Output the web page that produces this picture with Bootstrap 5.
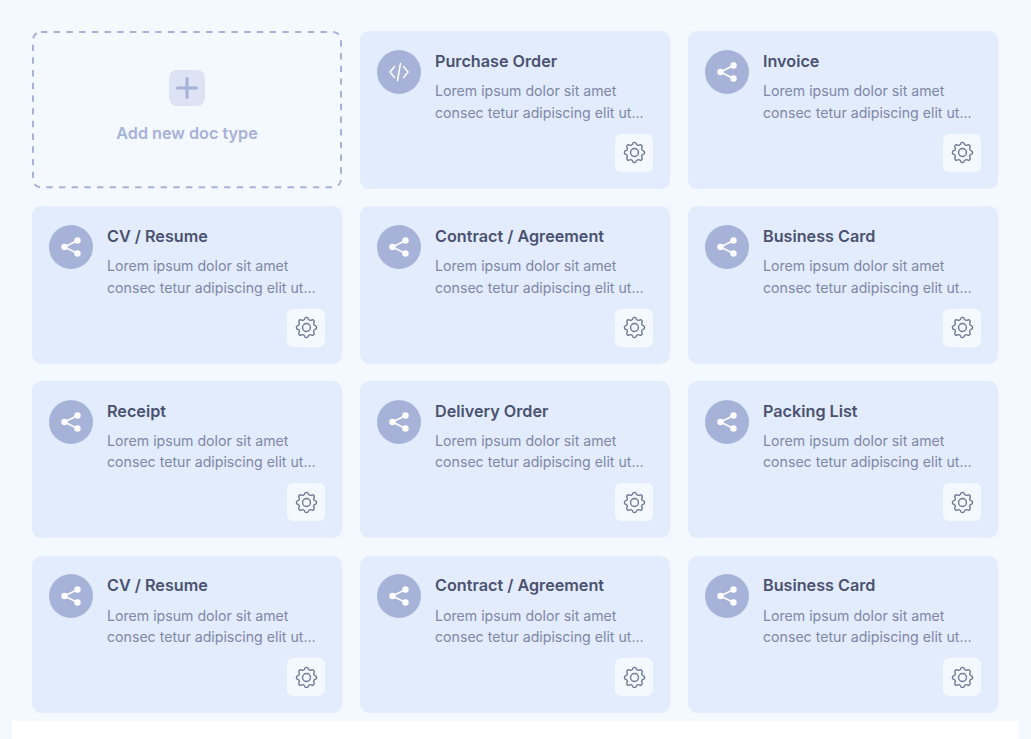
<!DOCTYPE html>
<html lang="en">
<head>
    <meta charset="UTF-8">
    <meta name="viewport" content="width=device-width, initial-scale=1.0">
    <title>Document types</title>
    <link href="https://cdn.jsdelivr.net/npm/bootstrap@5.3.2/dist/css/bootstrap.min.css" rel="stylesheet">
    <style>
        html, body {
            height: 739px;
            overflow: hidden;
        }
        body {
            background-color: #f4f8ff;
            font-family: "Inter", "Liberation Sans", sans-serif;
        }
        .doc-page {
            padding: 31.4px 33px 0 32px;
        }
        .doc-grid {
            --bs-gutter-x: 18px;
            --bs-gutter-y: 17.6px;
        }
        .doc-tile {
            height: 157.3px;
            background-color: #e2ecfd;
            border-radius: 9px;
            padding: 18.4px 17px 17px;
        }
        .doc-head {
            gap: 14px;
        }
        .doc-icon {
            width: 44px;
            height: 44px;
            background-color: #a7b2d8;
        }
        .doc-title {
            font-size: 16.2px;
            font-weight: 600;
            line-height: 22px;
            color: #4a5270;
            margin-bottom: 8.2px;
            margin-top: 0;
        }
        .doc-text {
            font-size: 14.15px;
            line-height: 21.7px;
            color: #7f87a6;
            margin: 0;
        }
        .doc-gear {
            width: 38px;
            height: 38px;
            background-color: #f4f8ff;
            border-radius: 6px;
            border: 0;
            padding: 0;
        }
        .doc-add {
            height: 157.3px;
            padding-bottom: 6px;
        }
        .doc-dash {
            inset: 0;
            width: 100%;
            height: 100%;
        }
        .doc-dash rect {
            x: 1px;
            y: 1px;
            width: calc(100% - 2px);
            height: calc(100% - 2px);
            rx: 8px;
            fill: none;
            stroke: #a7b2d8;
            stroke-width: 2;
            stroke-dasharray: 6.4 6.3;
        }
        .doc-plus {
            width: 36px;
            height: 36px;
            background-color: #dde3f4;
            border-radius: 8px;
        }
        .doc-add-label {
            font-size: 16.2px;
            font-weight: 600;
            color: #a7b2d8;
            line-height: 22px;
        }
        .doc-footer {
            height: 18.2px;
            margin: 7.6px 13px 0 12px;
            background-color: #fff;
        }
    </style>
</head>
<body>
    <div class="doc-page">
        <div class="row row-cols-3 doc-grid" id="docGrid">
            <div class="col">
                <div class="doc-add position-relative d-flex flex-column align-items-center justify-content-center gap-3">
                    <svg class="doc-dash position-absolute" aria-hidden="true"><rect></rect></svg>
                    <span class="doc-plus d-flex align-items-center justify-content-center">
                        <svg width="22" height="22" viewBox="0 0 22 22" fill="none" stroke="#a7b2d8" stroke-width="3" stroke-linecap="round"><path d="M11 1.5v19M1.5 11h19"/></svg>
                    </span>
                    <span class="doc-add-label">Add new doc type</span>
                </div>
            </div>
        </div>
    </div>
    <div class="doc-footer"></div>
    <script src="https://cdn.jsdelivr.net/npm/bootstrap@5.3.2/dist/js/bootstrap.bundle.min.js"></script>
    <script>
        // Iconos de las tarjetas
        const codeIcon = '<svg width="22" height="22" viewBox="0 0 22 22" fill="none" stroke="#fff" stroke-width="1.5" stroke-linecap="round" stroke-linejoin="round"><path d="M6.5 5.5 2 11l4.5 5.5M15.5 5.5 20 11l-4.5 5.5M12.5 2.5l-3 17"/></svg>';
        const shareIcon = '<svg width="24" height="24" viewBox="0 1 24 24" fill="#fff"><path d="M18.5 6.5 5.5 13l13 6.5" fill="none" stroke="#fff" stroke-width="1.6"/><circle cx="18.5" cy="6.5" r="3.2"/><circle cx="5.5" cy="13" r="3.2"/><circle cx="18.5" cy="19.5" r="3.2"/></svg>';
        const gearIcon = '<svg width="27" height="27" viewBox="0 0 24 24" fill="none" stroke="#6f7894" stroke-width="1.25" stroke-linecap="round" stroke-linejoin="round"><circle cx="12" cy="12" r="3.5"/><path d="M10.325 4.317c.426 -1.756 2.924 -1.756 3.35 0a1.724 1.724 0 0 0 2.573 1.066c1.543 -.94 3.31 .826 2.37 2.37a1.724 1.724 0 0 0 1.065 2.572c1.756 .426 1.756 2.924 0 3.35a1.724 1.724 0 0 0 -1.066 2.573c.94 1.543 -.826 3.31 -2.37 2.37a1.724 1.724 0 0 0 -2.572 1.065c-.426 1.756 -2.924 1.756 -3.35 0a1.724 1.724 0 0 0 -2.573 -1.066c-1.543 .94 -3.31 -.826 -2.37 -2.37a1.724 1.724 0 0 0 -1.065 -2.572c-1.756 -.426 -1.756 -2.924 0 -3.35a1.724 1.724 0 0 0 1.066 -2.573c-.94 -1.543 .826 -3.31 2.37 -2.37c1 .608 2.296 .07 2.572 -1.065z"/></svg>';

        const docs = ['Purchase Order', 'Invoice', 'CV / Resume', 'Contract / Agreement', 'Business Card', 'Receipt', 'Delivery Order', 'Packing List', 'CV / Resume', 'Contract / Agreement', 'Business Card'];
        const grid = document.getElementById('docGrid');
        docs.forEach(function (name, i) {
            grid.insertAdjacentHTML('beforeend', `
            <div class="col">
                <div class="doc-tile d-flex flex-column justify-content-between">
                    <div class="d-flex doc-head">
                        <span class="doc-icon rounded-circle d-flex align-items-center justify-content-center flex-shrink-0">${i === 0 ? codeIcon : shareIcon}</span>
                        <div>
                            <h3 class="doc-title">${name}</h3>
                            <p class="doc-text">Lorem ipsum dolor sit amet consec tetur adipiscing elit ut...</p>
                        </div>
                    </div>
                    <div class="d-flex justify-content-end">
                        <button type="button" class="doc-gear d-flex align-items-center justify-content-center" aria-label="Settings">${gearIcon}</button>
                    </div>
                </div>
            </div>`);
        });
    </script>
</body>
</html>
